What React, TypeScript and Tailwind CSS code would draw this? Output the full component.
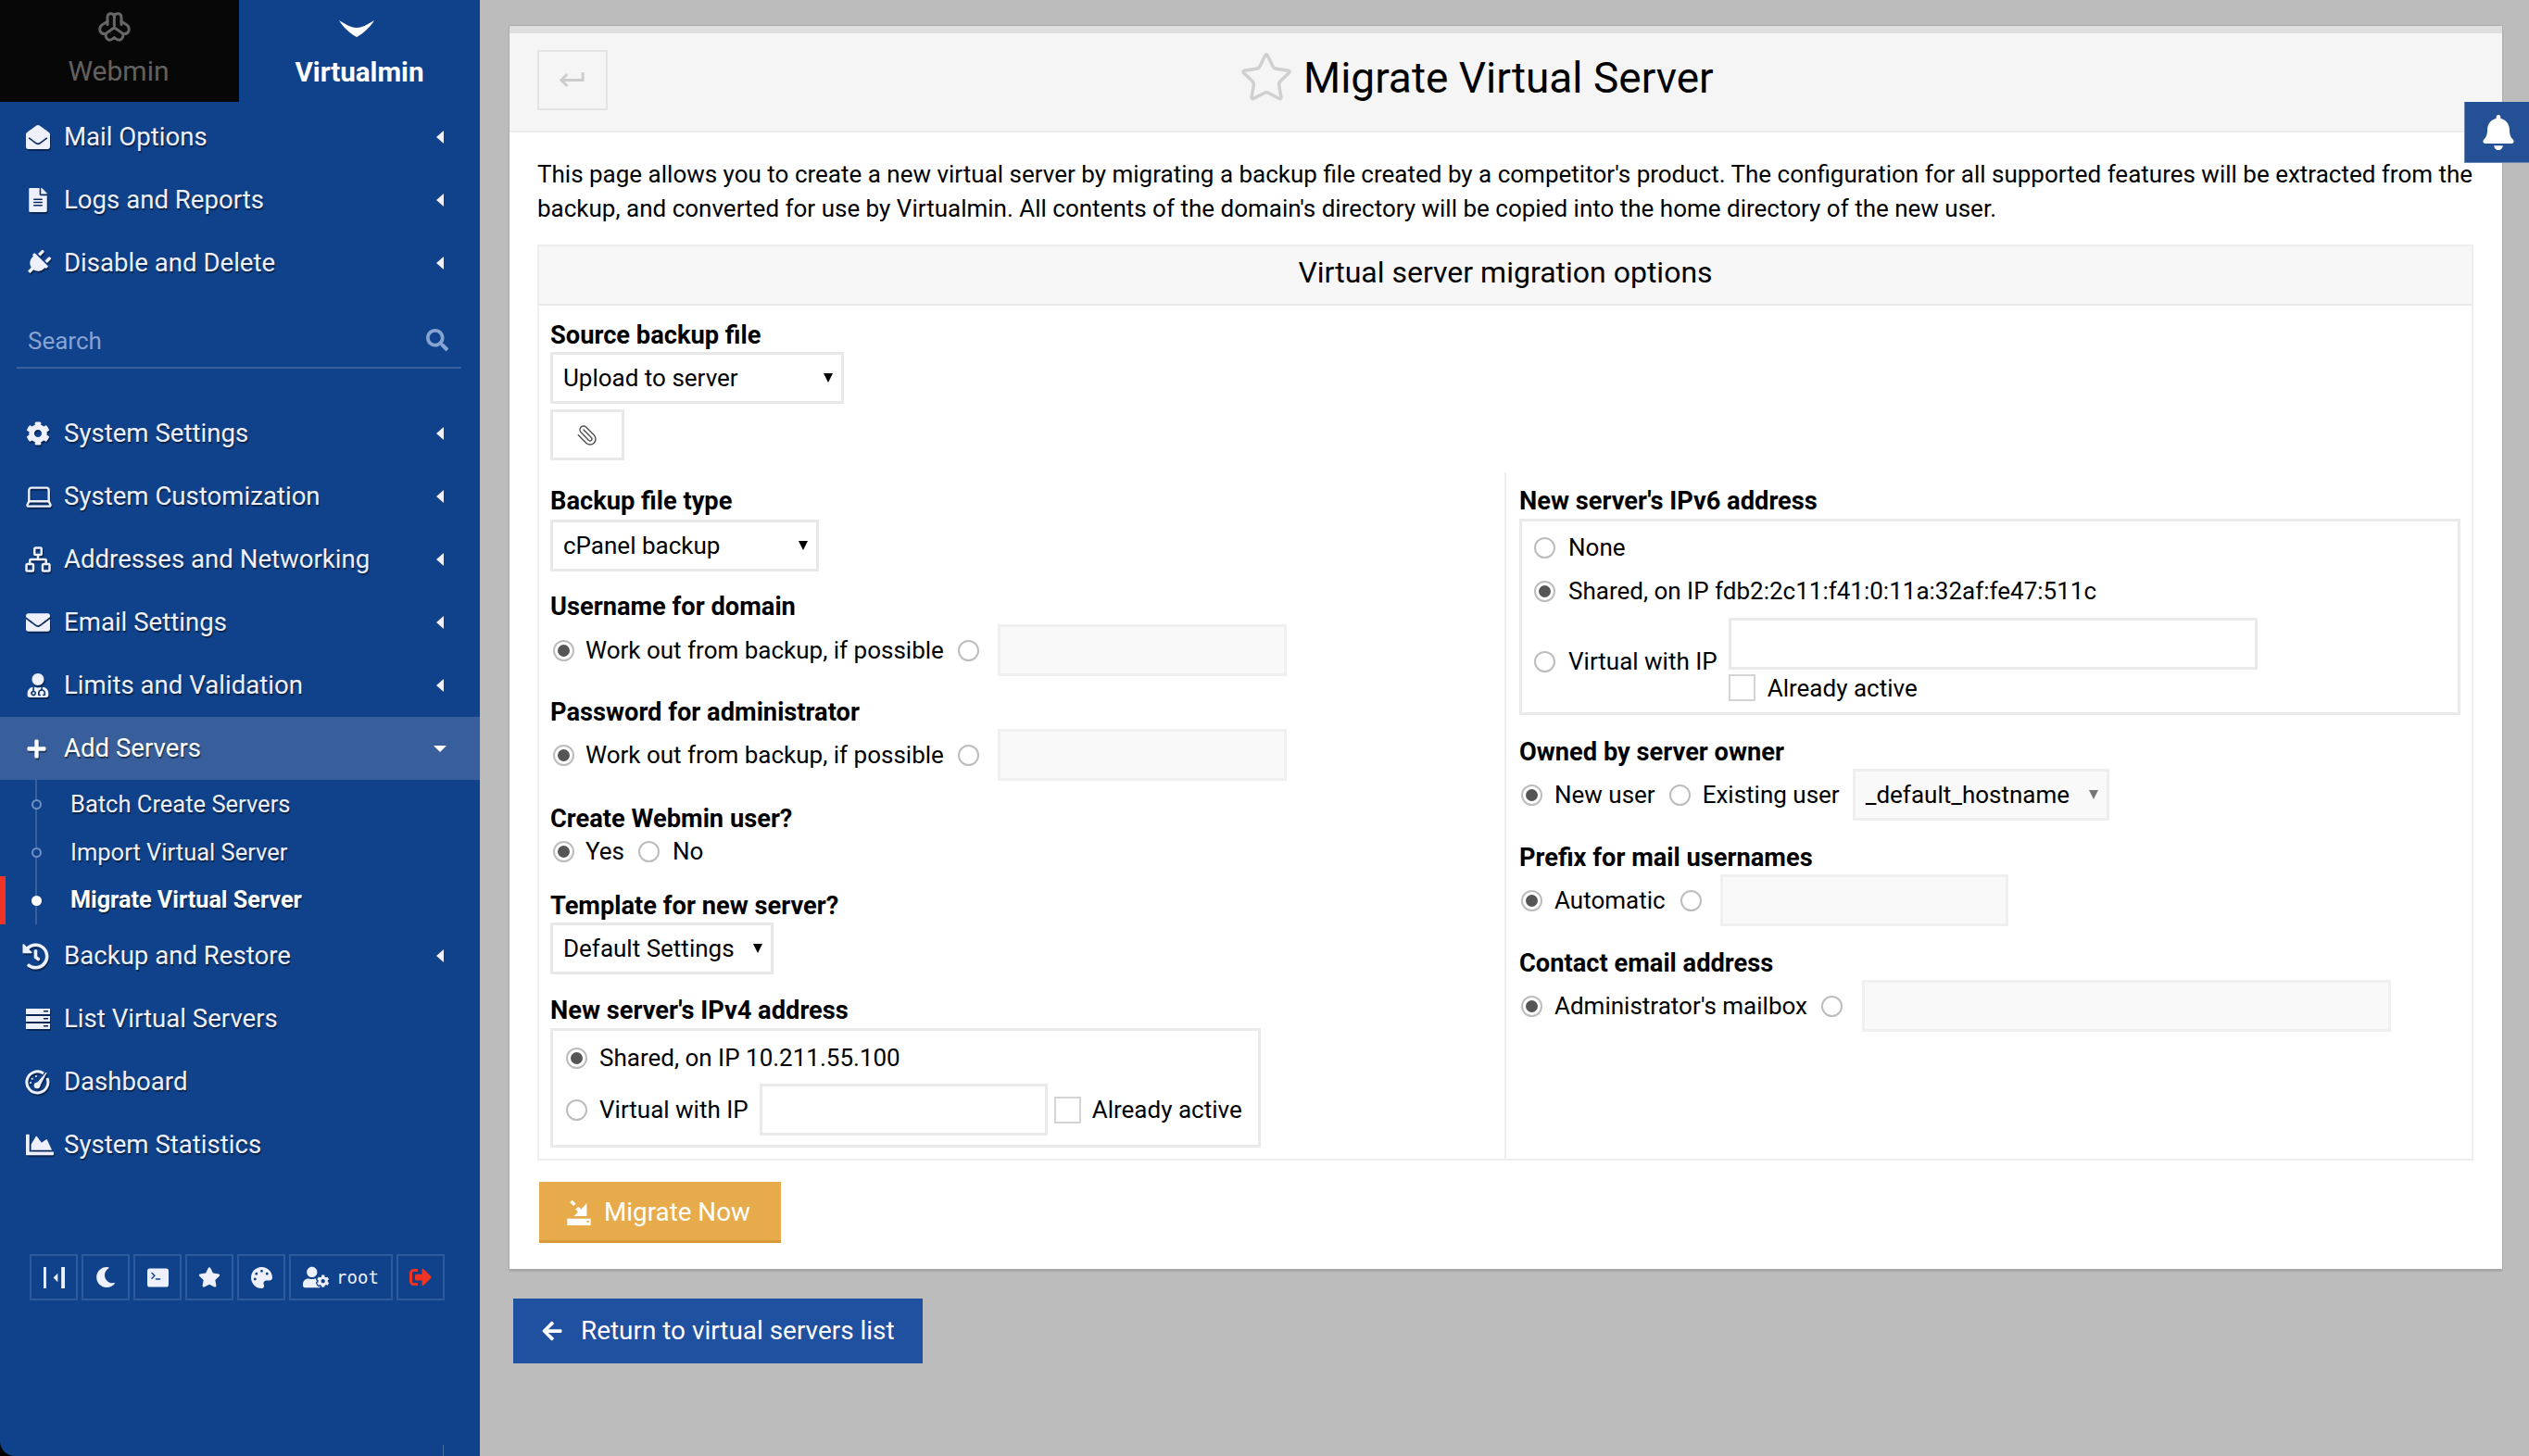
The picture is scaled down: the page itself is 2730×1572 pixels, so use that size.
import type { ReactNode } from 'react';
import {
  FaArrowLeft,
  FaBell,
  FaChartArea,
  FaCog,
  FaEnvelope,
  FaEnvelopeOpen,
  FaFileAlt,
  FaHistory,
  FaMoon,
  FaPalette,
  FaPlug,
  FaPlus,
  FaSearch,
  FaSignOutAlt,
  FaStar,
  FaUserCog,
  FaUserMd,
} from 'react-icons/fa';
import { BsTerminalFill } from 'react-icons/bs';
import { Laptop, Network, Paperclip, Star } from 'lucide-react';

function ServerIcon() {
  return (
    <svg viewBox="0 0 26 22" className="w-[26px] h-[22px]" fill="currentColor">
      <path d="M0 0h26v6H0zM19 2v1.500h5V2zM0 8h26v6H0zM19 10v1.500h5V10zM0 16h26v6H0zM19 18v1.500h5V18z" fillRule="evenodd" />
    </svg>
  );
}

function GaugeIcon() {
  return (
    <svg viewBox="0 0 28 28" className="w-[28px] h-[28px] -ml-[2px]" fill="none" stroke="currentColor">
      <path d="M21 5A11.500 11.500 0 1 0 25 10" strokeWidth="3" />
      <path d="M12 18L24 4l-8 16z" fill="currentColor" strokeWidth="1" />
      <circle cx="14" cy="18" r="3" fill="currentColor" />
      <path d="M6 15h2M8 10l1.500 1.500M13 7v2" strokeWidth="1.500" />
    </svg>
  );
}

function CollapseIcon() {
  return (
    <svg viewBox="0 0 24 24" className="w-[23px] h-[23px]" fill="currentColor">
      <path d="M0 0h3v24H0zM20 0h4v24h-4zM16 7v10l-5-5z" />
    </svg>
  );
}

function WebminLogo() {
  return (
    <svg viewBox="0 0 105 95" className="w-[35px] h-[32px] -ml-[9px]" fill="none" stroke="#666666" strokeWidth="9" strokeLinecap="round" strokeLinejoin="round">
      <path d="M30 40V16Q30 4 42 5Q52 6 52 14Q52 6 62 5Q75 4 75 16V40" />
      <path d="M52 14V44" />
      <path d="M30 30L14 40Q3 47 6 60Q10 72 24 70L52 50L81 70Q95 72 99 60Q102 47 91 40L75 30" />
      <path d="M24 70Q24 88 36 90Q44 90 52 82Q60 90 69 90Q81 88 81 70" />
    </svg>
  );
}

function VirtualminLogo() {
  return (
    <svg viewBox="0 0 38 18" className="w-[38px] h-[18px] -ml-[6px]" fill="#fff">
      <path d="M0 0C8 5 14 8 19 8C24 8 30 5 38 0C33 8 26 14 19 18C12 14 5 8 0 0z" />
    </svg>
  );
}

function MigrateIcon() {
  return (
    <svg viewBox="0 0 77 85" className="w-[26px] h-[28px]" fill="#fff">
      <path d="M9 10L16 2L28 14L21 21z" />
      <path d="M64 12V55H22L35 42L27 32L37 24L46 32z" />
      <path d="M0 63h77v22H0zM64 70v5h7v-5z" fillRule="evenodd" />
    </svg>
  );
}

function ReturnArrow() {
  return (
    <svg viewBox="0 0 30 18" className="w-[28px] h-[17px] -ml-[3px]" fill="none" stroke="#cccccc" strokeWidth="3">
      <path d="M28 0V9H4" />
      <path d="M10 2L3 9L10 16" />
    </svg>
  );
}

const topItems = [
  { label: 'Mail Options', icon: <FaEnvelopeOpen size={26} /> },
  { label: 'Logs and Reports', icon: <FaFileAlt size={26} /> },
  { label: 'Disable and Delete', icon: <FaPlug size={28} className="rotate-45 -ml-[1px]" /> },
];

const midItems = [
  { label: 'System Settings', icon: <FaCog size={26} /> },
  { label: 'System Customization', icon: <Laptop size={32} strokeWidth={1.8} className="-ml-[2px]" /> },
  { label: 'Addresses and Networking', icon: <Network size={30} strokeWidth={2} className="-ml-[2px]" /> },
  { label: 'Email Settings', icon: <FaEnvelope size={26} /> },
  { label: 'Limits and Validation', icon: <FaUserMd size={26} /> },
];

const subItems = ['Batch Create Servers', 'Import Virtual Server', 'Migrate Virtual Server'];

function MenuRow({ icon, label, arrow = true, active = false }: { icon: ReactNode; label: string; arrow?: boolean; active?: boolean }) {
  return (
    <div className={`flex items-center h-[68px] pl-[28px] pr-[39px] text-[27.6px] [text-shadow:1px_2px_1px_rgba(0,0,0,0.45)] ${active ? 'bg-[#385f9b] text-white' : 'text-[#eef0fb]'}`}>
      <span className="w-[41px] flex items-center justify-start drop-shadow-[1px_2px_0px_rgba(0,0,0,0.4)]">{icon}</span>
      <span className="flex-1 whitespace-nowrap">{label}</span>
      {arrow && !active && <span className="w-0 h-0 border-y-[7px] border-y-transparent border-r-[8px] border-r-[#eef0fb]" />}
      {active && <span className="w-0 h-0 -mr-[3px] border-x-[7px] border-x-transparent border-t-[7px] border-t-white" />}
    </div>
  );
}

function Radio({ on = false, className = '' }: { on?: boolean; className?: string }) {
  return (
    <span className={`w-[23px] h-[23px] shrink-0 rounded-full border-2 border-[#bdbdbd] bg-white flex items-center justify-center ${className}`}>
      {on && <span className="w-[13px] h-[13px] rounded-full bg-[#555555]" />}
    </span>
  );
}

function Check({ className = '' }: { className?: string }) {
  return <span className={`w-[29px] h-[29px] shrink-0 border-2 border-[#d4d4d4] bg-white ${className}`} />;
}

function Select({ label, w, disabled = false }: { label: string; w: string; disabled?: boolean }) {
  return (
    <div className={`${w} h-[56px] shrink-0 border-[3px] flex items-center justify-between pl-[11px] pr-[9px] ${disabled ? 'border-[#eeeeee] bg-[#f9f9f9]' : 'border-[#e8e8e8] bg-white'}`}>
      <span className="whitespace-nowrap">{label}</span>
      <span className={`w-0 h-0 border-x-[5px] border-x-transparent border-t-[10px] ${disabled ? 'border-t-[#777777]' : 'border-t-black'}`} />
    </div>
  );
}

function Input({ w, disabled = false, className = '' }: { w: string; disabled?: boolean; className?: string }) {
  return <div className={`${w} h-[56px] shrink-0 border-[3px] ${disabled ? 'border-[#f0f0f0] bg-[#f9f9f9]' : 'border-[#eaeaea] bg-white'} ${className}`} />;
}

function Label({ children, className = '' }: { children: ReactNode; className?: string }) {
  return <div className={`font-bold text-[27.25px] leading-[30px] pt-[1px] -mb-[1px] whitespace-nowrap ${className}`}>{children}</div>;
}

export default function App() {
  return (
    <div className="relative flex w-[2730px] h-[1572px] overflow-hidden bg-[#bcbcbc] text-[26px] text-black font-['Roboto','Liberation_Sans',sans-serif]">
      <div className="w-[518px] shrink-0 h-full bg-black">
        <aside className="relative w-full h-full bg-[#10428b] rounded-bl-[16px] flex flex-col">
          <div className="flex h-[110px]">
            <div className="w-[258px] bg-[#070707] flex flex-col items-center pt-[13px] pr-[2px] text-[#616161] text-[30px]">
              <WebminLogo />
              <span className="mt-[14px] leading-[36px]">Webmin</span>
            </div>
            <div className="flex-1 flex flex-col items-center pt-[22px] text-white text-[29.6px]">
              <VirtualminLogo />
              <span className="mt-[20px] leading-[36px] font-bold">Virtualmin</span>
            </div>
          </div>
          <nav className="mt-[4px]">
            {topItems.map((item) => (
              <MenuRow key={item.label} {...item} />
            ))}
          </nav>
          <div className="ml-[18px] mr-[20px] mt-[34px] h-[46px] border-b-2 border-[#38609c] pl-[12px] pr-[14px] flex items-start justify-between text-[#86a3d2] text-[26px] leading-[32px]">
            <span>Search</span>
            <FaSearch size={24} className="mt-[3px]" />
          </div>
          <nav className="mt-[36px]">
            {midItems.map((item) => (
              <MenuRow key={item.label} {...item} />
            ))}
            <MenuRow icon={<FaPlus size={23} />} label="Add Servers" active />
            <div className="relative h-[156px] text-[25.5px] text-[#eef0fb] [text-shadow:1px_2px_1px_rgba(0,0,0,0.45)]">
              <span className="absolute left-[38px] top-0 bottom-0 w-[2px] bg-[#38609c]" />
              <span className="absolute left-0 top-[104px] bottom-0 w-[6px] bg-[#ef3324]" />
              {subItems.map((s, i) => (
                <div key={s} className={`relative flex items-center h-[52px] pl-[34px] ${i === 2 ? 'font-bold text-white text-[25.2px]' : ''}`}>
                  {i === 2 ? (
                    <span className="w-[11px] h-[11px] rounded-full bg-white" />
                  ) : (
                    <span className="w-[11px] h-[11px] rounded-full border-2 border-[#6f8fc2] bg-[#10428b]" />
                  )}
                  <span className="ml-[31px] whitespace-nowrap">{s}</span>
                </div>
              ))}
            </div>
            <MenuRow icon={<FaHistory size={29} className="-ml-[4px]" />} label="Backup and Restore" />
            <MenuRow icon={<ServerIcon />} label="List Virtual Servers" arrow={false} />
            <MenuRow icon={<GaugeIcon />} label="Dashboard" arrow={false} />
            <MenuRow icon={<FaChartArea size={30} />} label="System Statistics" arrow={false} />
          </nav>
          <div className="mt-[84px] ml-[32px] flex gap-[4px] text-[#eef0fb] [&>div]:h-[50px] [&>div]:border-2 [&>div]:border-[#2c5a9c] [&>div]:flex [&>div]:items-center [&>div]:justify-center">
            <div className="w-[52px]"><CollapseIcon /></div>
            <div className="w-[52px]"><FaMoon size={22} /></div>
            <div className="w-[52px]"><BsTerminalFill size={23} /></div>
            <div className="w-[52px]"><FaStar size={24} /></div>
            <div className="w-[52px]"><FaPalette size={23} /></div>
            <div className="w-[112px] gap-[8px] font-['DejaVu_Sans_Mono',monospace] text-[19px]">
              <FaUserCog size={28} />
              <span>root</span>
            </div>
            <div className="w-[52px] text-[#ef3324]"><FaSignOutAlt size={24} /></div>
          </div>
          <span className="absolute left-[478px] bottom-0 w-px h-[12px] bg-[#4a6fa8]" />
        </aside>
      </div>

      <main className="flex-1">
        <section className="ml-[32px] mt-[28px] w-[2151px] h-[1344px] bg-white border-b-[2px] border-[#a8a8a8] border-t-[8px] border-t-[#dedede] shadow-[0_0_2px_rgba(0,0,0,0.25)]">
          <header className="relative h-[107px] bg-[#f5f5f5] border-b-2 border-[#ececec] flex items-start pl-[30px] pt-[18px]">
            <div className="w-[76px] h-[65px] border-2 border-[#e4e4e4] flex items-center justify-center">
              <ReturnArrow />
            </div>
            <div className="absolute left-[787px] top-[18px] flex items-center gap-[10px]">
              <Star size={60} strokeWidth={1.4} className="text-[#d0d0d0]" />
              <h1 className="text-[46px] leading-[56px] whitespace-nowrap">Migrate Virtual Server</h1>
            </div>
          </header>
          <p className="mx-[30px] mt-[27px] leading-[37px] w-[2100px]">
            This page allows you to create a new virtual server by migrating a backup file created by a competitor's product. The configuration for all supported features will be extracted from the backup, and converted for use by Virtualmin. All contents of the domain's directory will be copied into the home directory of the new user.
          </p>
          <div className="mx-[30px] mt-[20px] w-[2090px] h-[989px] border-2 border-[#eeeeee] flex flex-col">
            <div className="h-[64px] shrink-0 bg-[#f7f7f7] border-b-[2px] border-[#e8e8e8] flex items-center justify-center text-[32px] pb-[6px]">
              Virtual server migration options
            </div>
            <div className="px-[12px] pt-[16px]">
              <Label>Source backup file</Label>
              <div className="mt-[4px]">
                <Select label="Upload to server" w="w-[317px]" />
              </div>
              <div className="mt-[6px] w-[80px] h-[55px] border-[3px] border-[#e8e8e8] flex items-center justify-center text-[#555555]">
                <Paperclip size={24} strokeWidth={1.5} className="-scale-x-100" />
              </div>
            </div>
            <div className="flex flex-1 mt-[13px]">
              <div className="w-[1042px] shrink-0 pl-[12px] pt-[15px]">
                <Label>Backup file type</Label>
                <div className="mt-[6px]">
                  <Select label="cPanel backup" w="w-[290px]" />
                </div>

                <Label className="mt-[22px]">Username for domain</Label>
                <div className="flex items-center mt-[5px] pl-[3px]">
                  <Radio on />
                  <span className="ml-[12px] whitespace-nowrap">Work out from backup, if possible</span>
                  <Radio className="ml-[15px]" />
                  <Input w="w-[312px]" disabled className="ml-[20px]" />
                </div>

                <Label className="mt-[23px]">Password for administrator</Label>
                <div className="flex items-center mt-[4px] pl-[3px]">
                  <Radio on />
                  <span className="ml-[12px] whitespace-nowrap">Work out from backup, if possible</span>
                  <Radio className="ml-[15px]" />
                  <Input w="w-[312px]" disabled className="ml-[20px]" />
                </div>

                <Label className="mt-[25px]">Create Webmin user?</Label>
                <div className="flex items-center h-[30px] mt-[6px] pl-[3px]">
                  <Radio on />
                  <span className="ml-[12px]">Yes</span>
                  <Radio className="ml-[15px]" />
                  <span className="ml-[14px]">No</span>
                </div>

                <Label className="mt-[28px]">Template for new server?</Label>
                <div className="mt-[4px]">
                  <Select label="Default Settings" w="w-[241px]" />
                </div>

                <Label className="mt-[23px]">New server's IPv4 address</Label>
                <div className="mt-[5px] w-[767px] h-[129px] border-[3px] border-[#eaeaea] pl-[14px] pt-[14px]">
                  <div className="flex items-center h-[30px]">
                    <Radio on />
                    <span className="ml-[13px]">Shared, on IP 10.211.55.100</span>
                  </div>
                  <div className="flex items-center mt-[13px]">
                    <Radio />
                    <span className="ml-[13px] whitespace-nowrap">Virtual with IP</span>
                    <Input w="w-[311px]" className="ml-[12px]" />
                    <Check className="ml-[7px]" />
                    <span className="ml-[12px] whitespace-nowrap">Already active</span>
                  </div>
                </div>
              </div>

              <div className="flex-1 border-l-2 border-[#eeeeee] pl-[14px] pt-[15px]">
                <Label>New server's IPv6 address</Label>
                <div className="mt-[5px] w-[1016px] h-[212px] border-[3px] border-[#eaeaea] pl-[13px] pt-[13px]">
                  <div className="flex items-center h-[30px]">
                    <Radio />
                    <span className="ml-[14px]">None</span>
                  </div>
                  <div className="flex items-center h-[30px] mt-[17px]">
                    <Radio on />
                    <span className="ml-[14px] whitespace-nowrap">Shared, on IP fdb2:2c11:f41:0:11a:32af:fe47:511c</span>
                  </div>
                  <div className="flex items-center mt-[14px]">
                    <Radio className="mt-[4px]" />
                    <span className="ml-[14px] mt-[4px] whitespace-nowrap">Virtual with IP</span>
                    <div className="ml-[12px]">
                      <Input w="w-[571px]" />
                      <div className="flex items-center mt-[5px]">
                        <Check />
                        <span className="ml-[13px] leading-[28px]">Already active</span>
                      </div>
                    </div>
                  </div>
                </div>

                <Label className="mt-[24px]">Owned by server owner</Label>
                <div className="flex items-center mt-[4px] pl-[2px]">
                  <Radio on />
                  <span className="ml-[13px] whitespace-nowrap">New user</span>
                  <Radio className="ml-[15px]" />
                  <span className="ml-[13px] whitespace-nowrap">Existing user</span>
                  <span className="ml-[14px]">
                    <Select label="_default_hostname" w="w-[277px]" disabled />
                  </span>
                </div>

                <Label className="mt-[24px]">Prefix for mail usernames</Label>
                <div className="flex items-center mt-[4px] pl-[2px]">
                  <Radio on />
                  <span className="ml-[13px]">Automatic</span>
                  <Radio className="ml-[16px]" />
                  <Input w="w-[311px]" disabled className="ml-[20px]" />
                </div>

                <Label className="mt-[24px]">Contact email address</Label>
                <div className="flex items-center mt-[4px] pl-[2px]">
                  <Radio on />
                  <span className="ml-[13px] whitespace-nowrap">Administrator's mailbox</span>
                  <Radio className="ml-[15px]" />
                  <Input w="w-[571px]" disabled className="ml-[21px]" />
                </div>
              </div>
            </div>
          </div>
          <div className="ml-[32px] mt-[23px] w-[261px] h-[66px] bg-[#e8ab4b] border-b-[3px] border-[#d9983a] flex items-center pl-[30px] pt-[2px] text-white text-[27.8px]">
            <MigrateIcon />
            <span className="ml-[14px] whitespace-nowrap">Migrate Now</span>
          </div>
        </section>
        <div className="ml-[36px] mt-[30px] w-[442px] h-[70px] bg-[#2050a0] flex items-center pl-[30px] text-white text-[27.9px]">
          <FaArrowLeft size={24} />
          <span className="ml-[19px] whitespace-nowrap">Return to virtual servers list</span>
        </div>
      </main>

      <div className="absolute right-0 top-[110px] w-[70px] h-[66px] bg-[#245096] border-l border-b border-[#d8d8d8]/40 flex items-center justify-center pl-[3px] text-white">
        <FaBell size={38} />
      </div>
    </div>
  );
}
